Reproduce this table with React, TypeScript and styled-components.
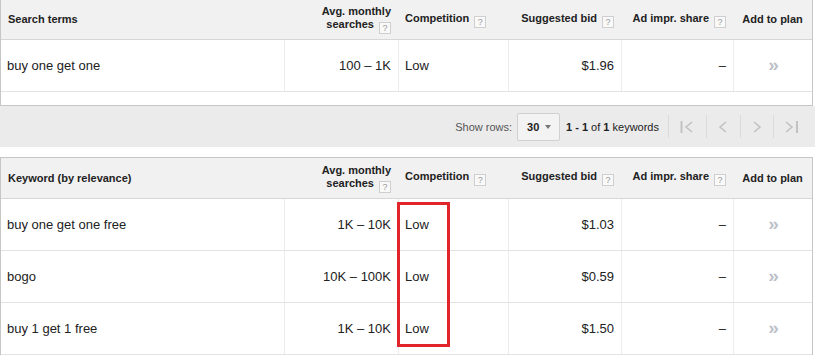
import React from 'react';
import styled, { createGlobalStyle } from 'styled-components';

type Align = 'left' | 'right' | 'center';

interface Column {
  label: React.ReactNode;
  align: Align;
  help?: boolean;
}

interface KeywordRow {
  term: string;
  searches: string;
  competition: string;
  bid: string;
  share: string;
}

const GlobalStyle = createGlobalStyle`
  body {
    margin: 0;
    background: #fff;
    font-family: "Liberation Sans", Arial, sans-serif;
    color: #222;
  }
`;

const columnsFor = (first: string): Column[] => [
  { label: first, align: 'left' },
  { label: <>Avg. monthly<br />searches</>, align: 'right', help: true },
  { label: 'Competition', align: 'left', help: true },
  { label: 'Suggested bid', align: 'right', help: true },
  { label: 'Ad impr. share', align: 'right', help: true },
  { label: 'Add to plan', align: 'center' },
];

const searchRows: KeywordRow[] = [
  { term: 'buy one get one', searches: '100 – 1K', competition: 'Low', bid: '$1.96', share: '–' },
];

const ideaRows: KeywordRow[] = [
  { term: 'buy one get one free', searches: '1K – 10K', competition: 'Low', bid: '$1.03', share: '–' },
  { term: 'bogo', searches: '10K – 100K', competition: 'Low', bid: '$0.59', share: '–' },
  { term: 'buy 1 get 1 free', searches: '1K – 10K', competition: 'Low', bid: '$1.50', share: '–' },
];

function HelpMark() {
  return <S.Help>?</S.Help>;
}

function KeywordTable({ first, rows, top, filler }: { first: string; rows: KeywordRow[]; top?: boolean; filler?: boolean }) {
  const columns = columnsFor(first);
  return (
    <S.Table $top={top} $closed={filler}>
      <S.HeaderRow $h={top ? 40 : 39}>
        {columns.map((c, i) => (
          <S.HeadCell key={i} $align={c.align}>
            <span>
              {c.label}
              {c.help && <HelpMark />}
            </span>
          </S.HeadCell>
        ))}
      </S.HeaderRow>
      {rows.map((r) => (
        <S.BodyRow key={r.term}>
          <S.Cell $align="left">{r.term}</S.Cell>
          <S.Cell $align="right" $sep>{r.searches}</S.Cell>
          <S.Cell $align="left" $sep>{r.competition}</S.Cell>
          <S.Cell $align="right" $sep>{r.bid}</S.Cell>
          <S.Cell $align="right" $sep>{r.share}</S.Cell>
          <S.Cell $align="center" $sep>
            <S.AddArrow>»</S.AddArrow>
          </S.Cell>
        </S.BodyRow>
      ))}
      {filler && <S.Filler />}
      {!filler && <S.Highlight />}
    </S.Table>
  );
}

function NavIcon({ kind }: { kind: 'first' | 'prev' | 'next' | 'last' }) {
  const paths = {
    first: 'M12 2 L6 7 L12 12',
    prev: 'M10 2 L4 7 L10 12',
    next: 'M5 2 L11 7 L5 12',
    last: 'M3 2 L9 7 L3 12',
  };
  return (
    <svg width="16" height="14" viewBox="0 0 16 14" fill="none" stroke="#c2c2c2" strokeWidth="1.6">
      {kind === 'first' && <path d="M1.5 1 V13" strokeWidth="2" />}
      {kind === 'last' && <path d="M14 1 V13" strokeWidth="2" />}
      <path d={paths[kind]} />
    </svg>
  );
}

function Pager() {
  return (
    <S.PagerBar>
      <S.PagerLabel>Show rows:</S.PagerLabel>
      <S.RowSelect>
        30 <S.Caret />
      </S.RowSelect>
      <S.PagerCount>
        <b>1 - 1</b> of <b>1</b> keywords
      </S.PagerCount>
      <S.NavGroup>
        <S.NavButton $w={37}><NavIcon kind="first" /></S.NavButton>
        <S.NavButton $w={33}><NavIcon kind="prev" /></S.NavButton>
        <S.NavButton $w={32}><NavIcon kind="next" /></S.NavButton>
        <S.NavButton $w={34}><NavIcon kind="last" /></S.NavButton>
      </S.NavGroup>
    </S.PagerBar>
  );
}

export default function App() {
  return (
    <S.Page>
      <GlobalStyle />
      <KeywordTable first="Search terms" rows={searchRows} filler />
      <Pager />
      <S.Gap />
      <KeywordTable first="Keyword (by relevance)" rows={ideaRows} top />
    </S.Page>
  );
}

const grid = `
  display: grid;
  grid-template-columns: 283px 114px 110px 113px 112px 1fr;
`;

const S = {
  Page: styled.div`
    width: 815px;
    height: 355px;
    overflow: hidden;
  `,
  Table: styled.div<{ $top?: boolean; $closed?: boolean }>`
    position: relative;
    width: 813px;
    box-sizing: border-box;
    border-left: 1px solid #c6c6c6;
    border-right: 1px solid #c6c6c6;
    border-top: ${(p) => (p.$top ? '1px solid #c6c6c6' : 'none')};
    border-bottom: ${(p) => (p.$closed ? '1px solid #c6c6c6' : 'none')};
  `,
  HeaderRow: styled.div<{ $h: number }>`
    ${grid}
    height: ${(p) => p.$h}px;
    background: #f1f1f1;
    border-bottom: 1px solid #d6d6d6;
  `,
  HeadCell: styled.div<{ $align: Align }>`
    display: flex;
    align-items: center;
    justify-content: ${(p) => (p.$align === 'left' ? 'flex-start' : p.$align === 'right' ? 'flex-end' : 'center')};
    text-align: ${(p) => p.$align};
    padding: 0 7px;
    font-size: 11px;
    line-height: 13px;
    font-weight: bold;
    color: #222;
  `,
  Help: styled.span`
    display: inline-block;
    box-sizing: border-box;
    width: 12px;
    height: 12px;
    margin-left: 5px;
    vertical-align: -3px;
    border: 1px solid #cfcfcf;
    background: #f9f9f9;
    color: #9a9a9a;
    font-size: 9px;
    line-height: 10px;
    font-weight: normal;
    text-align: center;
  `,
  BodyRow: styled.div`
    ${grid}
    height: 51px;
    border-bottom: 1px solid #e3e3e3;
    background: #fff;
  `,
  Cell: styled.div<{ $align: Align; $sep?: boolean }>`
    display: flex;
    align-items: center;
    justify-content: ${(p) => (p.$align === 'left' ? 'flex-start' : p.$align === 'right' ? 'flex-end' : 'center')};
    padding: 0 7px 0 6px;
    font-size: 13px;
    color: #222;
    border-left: ${(p) => (p.$sep ? '1px solid #ececec' : 'none')};
  `,
  AddArrow: styled.span`
    font-size: 19px;
    line-height: 19px;
    font-weight: bold;
    color: #bcc0c8;
    margin: -2px 0 0 2px;
  `,
  Filler: styled.div`
    height: 13px;
  `,
  Highlight: styled.div`
    position: absolute;
    left: 396px;
    top: 44px;
    width: 53px;
    height: 145px;
    box-sizing: border-box;
    border: 3px solid #e0252b;
    pointer-events: none;
  `,
  PagerBar: styled.div`
    display: flex;
    align-items: center;
    justify-content: flex-end;
    height: 41px;
    background: #ebebeb;
    padding-right: 7px;
    font-size: 11px;
  `,
  PagerLabel: styled.span`
    color: #555;
    margin-right: 5px;
  `,
  RowSelect: styled.div`
    display: flex;
    align-items: center;
    gap: 6px;
    box-sizing: border-box;
    height: 28px;
    width: 43px;
    padding-left: 9px;
    border: 1px solid #d0d0d0;
    border-radius: 2px;
    background: #f3f3f3;
    font-weight: bold;
    font-size: 11px;
    color: #222;
    margin-right: 6px;
  `,
  Caret: styled.span`
    width: 0;
    height: 0;
    border-left: 3.5px solid transparent;
    border-right: 3.5px solid transparent;
    border-top: 4px solid #777;
  `,
  PagerCount: styled.span`
    color: #222;
    margin-right: 9px;
    b {
      font-weight: bold;
    }
  `,
  NavGroup: styled.div`
    display: flex;
    align-items: center;
  `,
  NavButton: styled.div<{ $w: number }>`
    display: flex;
    align-items: center;
    justify-content: center;
    width: ${(p) => p.$w}px;
    height: 23px;
    border-left: 1px solid #dadada;
  `,
  Gap: styled.div`
    height: 10px;
  `,
};
